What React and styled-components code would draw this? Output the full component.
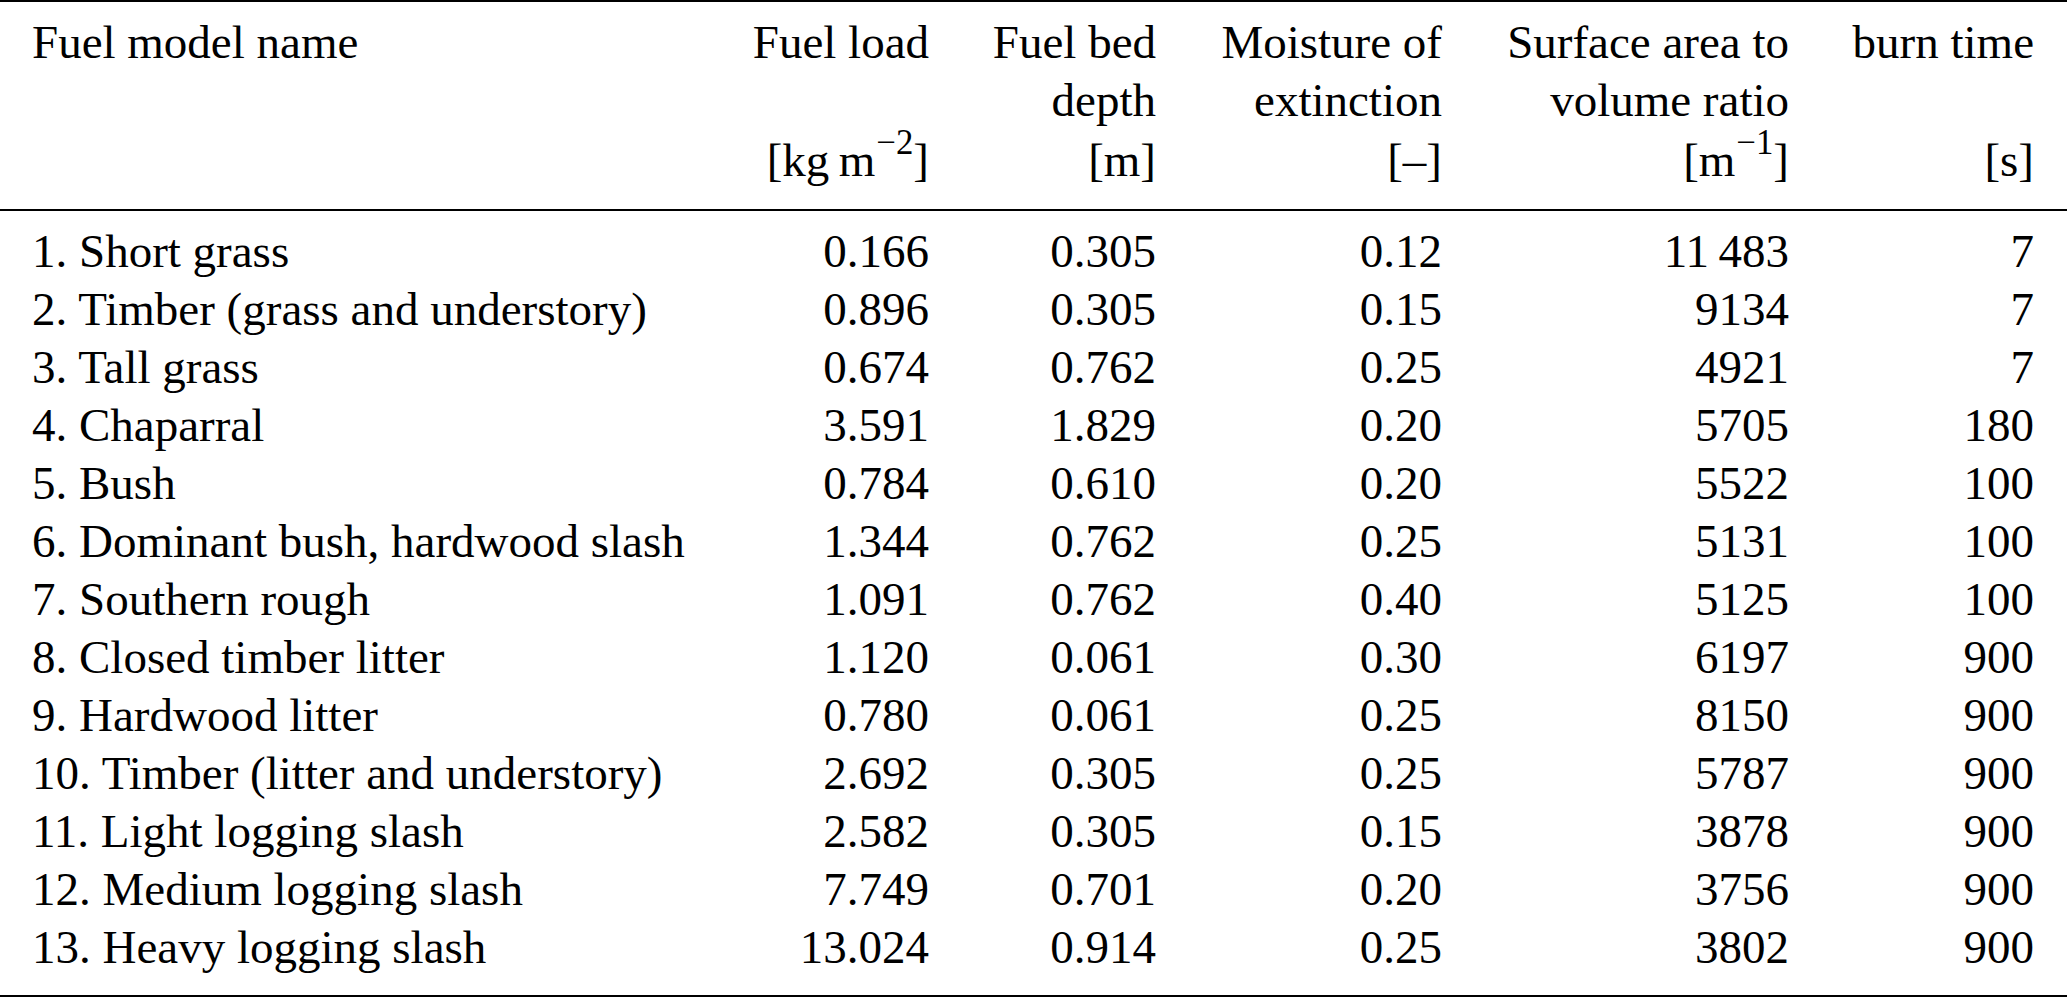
import React from 'react';
import styled, { createGlobalStyle, css } from 'styled-components';

const GlobalStyle = createGlobalStyle`
  html, body {
    margin: 0;
    padding: 0;
    background: #fff;
  }
  body {
    font-family: "Liberation Serif", "Times New Roman", serif;
    color: #000;
  }
`;

const rows = [
  ['1. Short grass', '0.166', '0.305', '0.12', '11\u2009483', '7'],
  ['2. Timber (grass and understory)', '0.896', '0.305', '0.15', '9134', '7'],
  ['3. Tall grass', '0.674', '0.762', '0.25', '4921', '7'],
  ['4. Chaparral', '3.591', '1.829', '0.20', '5705', '180'],
  ['5. Bush', '0.784', '0.610', '0.20', '5522', '100'],
  ['6. Dominant bush, hardwood slash', '1.344', '0.762', '0.25', '5131', '100'],
  ['7. Southern rough', '1.091', '0.762', '0.40', '5125', '100'],
  ['8. Closed timber litter', '1.120', '0.061', '0.30', '6197', '900'],
  ['9. Hardwood litter', '0.780', '0.061', '0.25', '8150', '900'],
  ['10. Timber (litter and understory)', '2.692', '0.305', '0.25', '5787', '900'],
  ['11. Light logging slash', '2.582', '0.305', '0.15', '3878', '900'],
  ['12. Medium logging slash', '7.749', '0.701', '0.20', '3756', '900'],
  ['13. Heavy logging slash', '13.024', '0.914', '0.25', '3802', '900'],
];

const columns = css`
  display: grid;
  grid-template-columns: 655px 186px 171px 230px 291px 189px;
  column-gap: 56px;
  padding-left: 32px;
  padding-right: 33px;
`;

const Table = styled.div`
  width: 2067px;
  font-size: 47px;
  line-height: 58px;
  border-top: 2px solid #000;
  border-bottom: 2px solid #000;
`;

const Head = styled.div`
  ${columns};
  padding-top: 11px;
  padding-bottom: 20px;
  border-bottom: 2px solid #000;
`;

const Body = styled.div`
  ${columns};
  padding-top: 11px;
  padding-bottom: 19px;
`;

const HeadCell = styled.div`
  display: flex;
  flex-direction: column;
  align-items: ${p => (p.$left ? 'flex-start' : 'flex-end')};
  text-align: ${p => (p.$left ? 'left' : 'right')};
  white-space: nowrap;
`;

const HeadTitle = styled.div`
  min-height: 116px;
`;

const HeadUnit = styled.div`
  margin-top: 2px;
  min-height: 58px;
`;

const Cell = styled.div`
  height: 58px;
  white-space: nowrap;
  text-align: ${p => (p.$left ? 'left' : 'right')};
`;

const Sup = styled.span`
  font-size: 0.74em;
  line-height: 0;
  vertical-align: 0.62em;
  margin-left: 1px;
`;

const headers = [
  { title: ['Fuel model name'], unit: null, left: true },
  { title: ['Fuel load'], unit: <>[kg{'\u2009'}m<Sup>−2</Sup>]</> },
  { title: ['Fuel bed', 'depth'], unit: '[m]' },
  { title: ['Moisture of', 'extinction'], unit: '[–]' },
  { title: ['Surface area to', 'volume ratio'], unit: <>[m<Sup>−1</Sup>]</> },
  { title: ['burn time'], unit: '[s]' },
];

export default function App() {
  return (
    <>
      <GlobalStyle />
      <Table>
        <Head>
          {headers.map((h, i) => (
            <HeadCell key={i} $left={h.left}>
              <HeadTitle>
                {h.title.map((t, j) => (
                  <div key={j}>{t}</div>
                ))}
              </HeadTitle>
              {h.unit && <HeadUnit>{h.unit}</HeadUnit>}
            </HeadCell>
          ))}
        </Head>
        <Body>
          {rows.map((r, i) =>
            r.map((v, j) => (
              <Cell key={`${i}-${j}`} $left={j === 0}>
                {v}
              </Cell>
            ))
          )}
        </Body>
      </Table>
    </>
  );
}
